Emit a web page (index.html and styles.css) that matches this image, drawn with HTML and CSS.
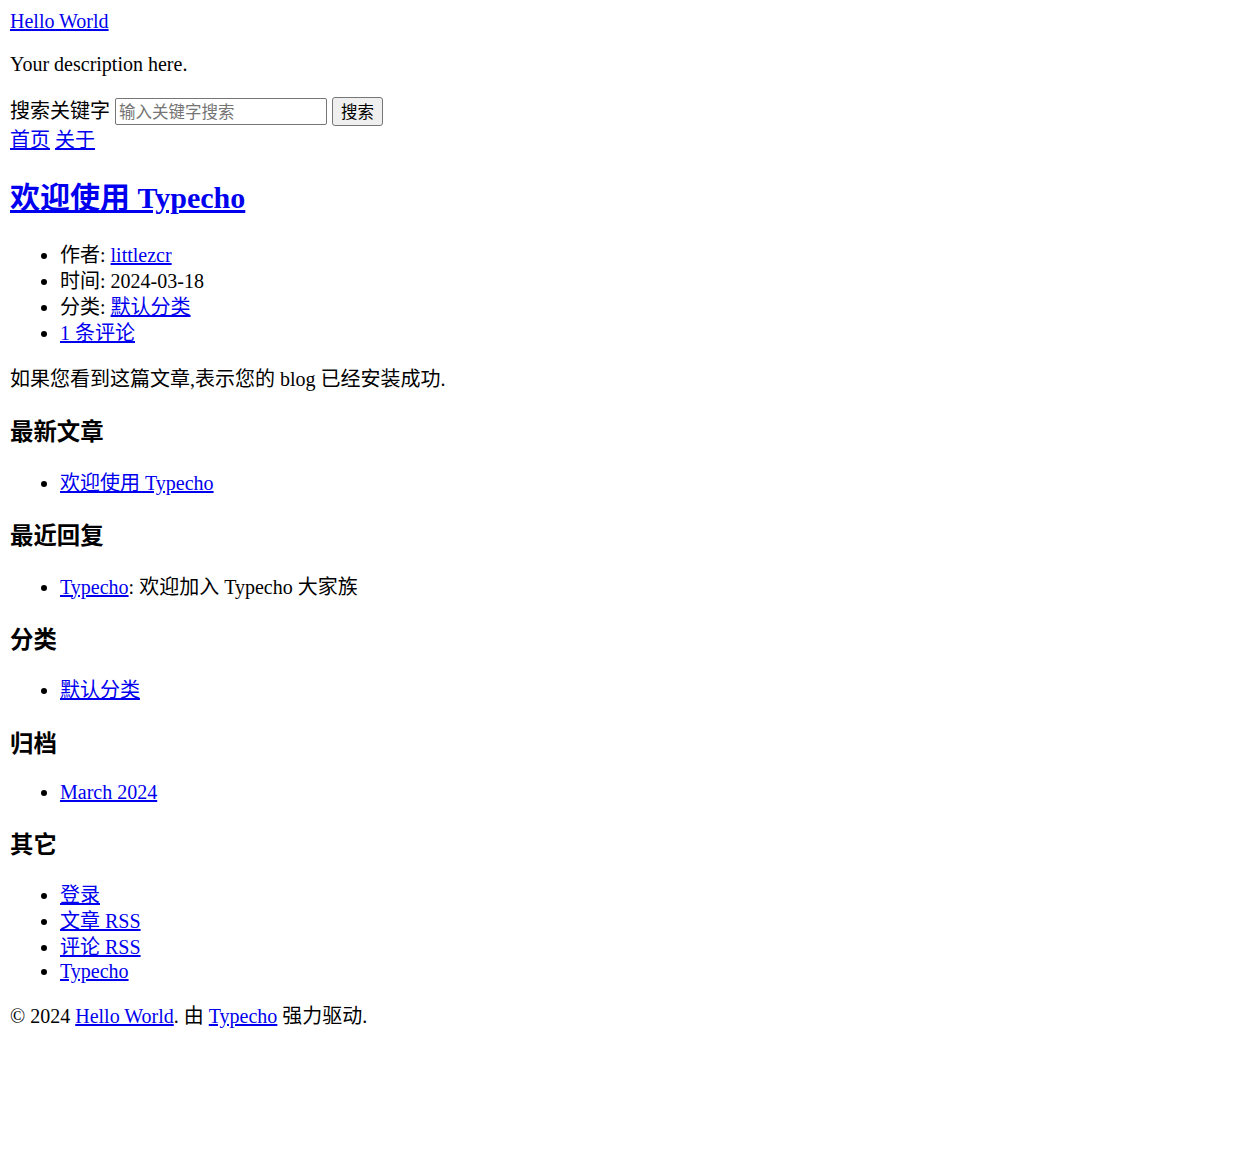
FILE: index.html
```html
<!DOCTYPE html>
<html lang="zh-CN">
<head>
<meta charset="utf-8">
<title>Hello World</title>
<link rel="stylesheet" href="styles.css">
</head>
<body class="page">
<header class="site-header">
  <div class="logo latin"><a href="#">Hello World</a></div>
  <p class="description latin">Your description here.</p>
  <form class="search" action="#">
    <label class="search-label" for="s">搜索关键字</label>
    <input class="search-input" type="text" id="s" name="s" placeholder="输入关键字搜索">
    <button class="search-btn" type="submit">搜索</button>
  </form>
  <nav class="nav">
    <a href="#">首页</a>
    <a href="#">关于</a>
  </nav>
</header>
<main class="main">
  <article class="post">
    <h2 class="post-title"><a href="#">欢迎使用 Typecho</a></h2>
    <ul class="list">
      <li>作者: <a href="#">littlezcr</a></li>
      <li>时间: 2024-03-18</li>
      <li>分类: <a href="#">默认分类</a></li>
      <li><a href="#">1 条评论</a></li>
    </ul>
    <div class="post-content">
      <p class="para">如果您看到这篇文章,表示您的 blog 已经安装成功.</p>
    </div>
  </article>
</main>
<aside class="sidebar">
  <section class="widget">
    <h3 class="widget-title">最新文章</h3>
    <ul class="list">
      <li><a href="#">欢迎使用 Typecho</a></li>
    </ul>
  </section>
  <section class="widget">
    <h3 class="widget-title">最近回复</h3>
    <ul class="list">
      <li><a href="#">Typecho</a>: 欢迎加入 Typecho 大家族</li>
    </ul>
  </section>
  <section class="widget">
    <h3 class="widget-title">分类</h3>
    <ul class="list">
      <li><a href="#">默认分类</a></li>
    </ul>
  </section>
  <section class="widget">
    <h3 class="widget-title">归档</h3>
    <ul class="list">
      <li class="latin"><a href="#">March 2024</a></li>
    </ul>
  </section>
  <section class="widget">
    <h3 class="widget-title">其它</h3>
    <ul class="list">
      <li><a href="#">登录</a></li>
      <li><a href="#">文章 RSS</a></li>
      <li><a href="#">评论 RSS</a></li>
      <li class="latin"><a href="#">Typecho</a></li>
    </ul>
  </section>
</aside>
<footer class="footer">
  &copy; 2024 <a href="#">Hello World</a>. 由 <a href="#">Typecho</a> 强力驱动.
</footer>
</body>
</html>
```
FILE: styles.css
```css
.page {
  margin: 10px;
  font-family: "Liberation Serif", "Noto Sans CJK SC", serif;
  font-size: 20px;
  line-height: 26px;
  color: #000;
  background: #fff;
}
.page a {
  color: #0000ee;
  text-decoration: underline;
}
.latin {
  line-height: 23px;
}
.description {
  margin: 20px 0;
}
.search {
  margin: 0;
  line-height: 31px;
}
.search-input {
  font-family: "Noto Sans CJK SC", sans-serif;
  font-size: 16.5px;
  line-height: normal;
  width: 212px;
  height: 27px;
  box-sizing: border-box;
  padding: 1px 3px;
  border: 1px solid #767676;
  border-radius: 2px;
  color: #000;
  vertical-align: baseline;
}
.search-input::placeholder {
  color: #757575;
}
.search-btn {
  font-family: "Noto Sans CJK SC", sans-serif;
  font-size: 16.5px;
  line-height: normal;
  height: 29px;
  padding: 0 8px;
  border: 1px solid #767676;
  border-radius: 3px;
  background: #efefef;
  color: #000;
}
.post-title {
  font-size: 30px;
  line-height: 39px;
  font-weight: bold;
  margin: 25px 0;
}
.list {
  margin: 20px 0;
  padding-left: 50px;
}
.para {
  margin: 20px 0;
}
.widget-title {
  font-family: "Noto Sans CJK SC", sans-serif;
  font-size: 23.4px;
  line-height: 31px;
  font-weight: bold;
  margin: 23.4px 0;
}
.footer {
  margin: 0;
}
```
